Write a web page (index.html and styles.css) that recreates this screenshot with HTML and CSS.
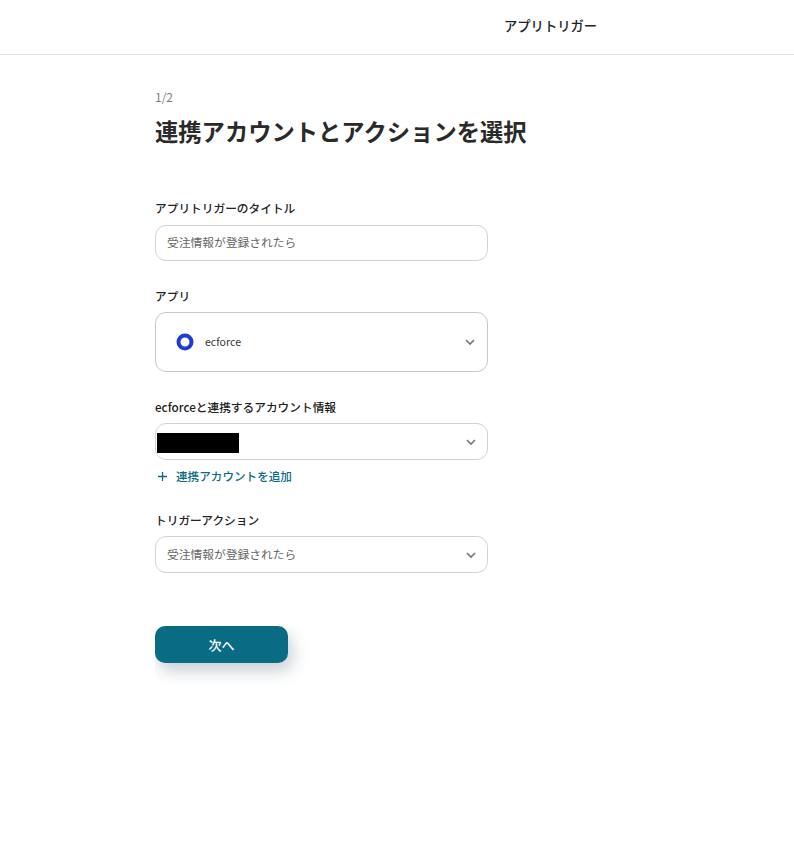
FILE: index.html
```html
<!DOCTYPE html>
<html lang="ja">
<head>
  <meta charset="UTF-8">
  <meta name="viewport" content="width=device-width, initial-scale=1.0">
  <title>アプリトリガー</title>
  <link rel="stylesheet" href="styles.css">
</head>
<body>
<header class="header">
  <span class="header-title">アプリトリガー</span>
</header>

<main class="container">
  <p class="step">1/2</p>
  <h1>連携アカウントとアクションを選択</h1>

  <div class="field field-title">
    <label>アプリトリガーのタイトル</label>
    <div class="box box-short"><span class="box-text">受注情報が登録されたら</span></div>
  </div>

  <div class="field">
    <label>アプリ</label>
    <div class="box box-app">
      <svg class="app-icon" width="18" height="18" viewBox="0 0 18 18">
        <circle cx="9" cy="9" r="6.5" fill="none" stroke="#1e3bd6" stroke-width="4"/>
      </svg>
      <span class="app-name">ecforce</span>
      <svg class="chevron" width="12" height="8" viewBox="0 0 12 8">
        <path d="M2 2 L6 6 L10 2" fill="none" stroke="#757575" stroke-width="1.6"/>
      </svg>
    </div>
  </div>

  <div class="field">
    <label>ecforceと連携するアカウント情報</label>
    <div class="box box-account">
      <div class="masked"></div>
      <svg class="chevron" width="12" height="8" viewBox="0 0 12 8">
        <path d="M2 2 L6 6 L10 2" fill="none" stroke="#757575" stroke-width="1.6"/>
      </svg>
    </div>
    <a class="add-account" href="#">
      <svg width="11" height="11" viewBox="0 0 11 11">
        <path d="M5.5 1 V10 M1 5.5 H10" fill="none" stroke="#0a6b84" stroke-width="1.3"/>
      </svg>
      連携アカウントを追加
    </a>
  </div>

  <div class="field">
    <label>トリガーアクション</label>
    <div class="box">
      <span class="box-text">受注情報が登録されたら</span>
      <svg class="chevron" width="12" height="8" viewBox="0 0 12 8">
        <path d="M2 2 L6 6 L10 2" fill="none" stroke="#757575" stroke-width="1.6"/>
      </svg>
    </div>
  </div>

  <div class="next-wrap">
    <button class="next">次へ</button>
  </div>
</main>
</body>
</html>
```

FILE: styles.css
```css
* {
  box-sizing: border-box;
}
body {
  font-family: "Noto Sans CJK JP", "Noto Sans", sans-serif;
  margin: 0;
  padding: 0;
  background-color: #fff;
  color: #222;
}
.header {
  height: 55px;
  border-bottom: 1px solid #e4e4e4;
  display: flex;
  align-items: center;
  padding-left: 504px;
  padding-bottom: 2px;
}
.header-title {
  font-size: 13.3px;
  font-weight: 500;
  line-height: 20px;
}
.container {
  width: 333px;
  margin-left: 155px;
  padding-top: 34px;
  padding-bottom: 60px;
}
.step {
  margin: 0;
  font-size: 12px;
  line-height: 16px;
  color: #808080;
}
h1 {
  margin: 9px 0 0;
  font-size: 23.3px;
  font-weight: 700;
  line-height: 34px;
  color: #2a2a2a;
  white-space: nowrap;
}
.field {
  margin-top: 26px;
}
.field-title {
  margin-top: 51px;
}
.field label {
  display: block;
  font-size: 11.7px;
  font-weight: 500;
  line-height: 18px;
  color: #222;
}
.box {
  margin-top: 7px;
  height: 37px;
  border: 1px solid #cfd3d8;
  border-radius: 11px;
  padding-left: 11px;
  padding-right: 10px;
  display: flex;
  align-items: center;
  font-size: 11.75px;
  color: #666;
  background: #fff;
}
.box-short {
  margin-top: 8px;
  height: 36px;
}
.box-text {
  margin-bottom: 2px;
}
.box-short .box-text {
  margin-bottom: 4px;
}
.box-app {
  height: 60px;
  padding-left: 20px;
  padding-right: 11px;
  border-color: #c8c8c8;
}
.box-account {
  padding-left: 1px;
}
.app-icon {
  flex: none;
}
.app-name {
  margin-left: 11px;
  margin-bottom: 2px;
  font-size: 10.6px;
  color: #333;
}
.chevron {
  margin-left: auto;
  flex: none;
}
.masked {
  width: 82px;
  height: 20px;
  background: #000;
  margin-top: 3px;
}
.add-account {
  display: flex;
  align-items: center;
  gap: 8px;
  margin-top: 7px;
  padding-left: 2px;
  font-size: 11.6px;
  font-weight: 500;
  line-height: 18px;
  color: #0a6b84;
  text-decoration: none;
}
/* the shadow is cut off on the left and at the edges of this wrapper */
.next-wrap {
  margin-top: 53px;
  width: 154px;
  height: 60px;
  overflow: hidden;
}
.next {
  display: block;
  width: 133px;
  height: 37px;
  border: none;
  border-radius: 10px;
  background-color: #0a6b84;
  color: #fff;
  font-family: inherit;
  font-size: 13px;
  font-weight: 500;
  box-shadow: 4px 8px 16px rgba(30, 60, 80, 0.24);
}
```
